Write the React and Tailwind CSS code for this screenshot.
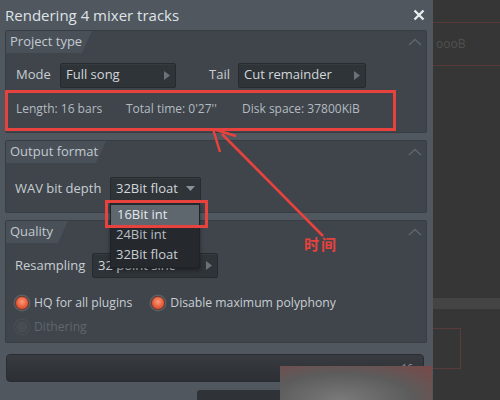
import React from "react";

const font = { fontFamily: '"Open Sans", "Noto Sans", "Noto Sans CJK SC", sans-serif' };

function Chevron() {
  return (
    <svg width="14" height="8" viewBox="0 0 14 8" className="mr-[4px]">
      <path d="M1 7 L7 1.5 L13 7" fill="none" stroke="#5d656d" strokeWidth="1.6" />
    </svg>
  );
}

function PanelHeader({ title, width }) {
  return (
    <div className="flex items-start justify-between h-[22px]">
      <div className="relative h-[22px] flex items-center" style={{ width }}>
        <svg className="absolute inset-0" width={width} height="22" viewBox={`0 0 ${width} 22`}>
          <path d={`M0 0 H${width} L${width - 10} 22 H0 Z`} fill="#495058" />
        </svg>
        <span className="relative pl-[4px] text-[13px] text-[#c3cad0]">{title}</span>
      </div>
      <div className="pt-[7px]">
        <Chevron />
      </div>
    </div>
  );
}

function Select({ value, width, arrow = "right" }) {
  return (
    <div
      className="h-[25px] bg-[#2f3439] border border-[#272b2f] rounded-[2px] flex items-center justify-between px-[5px] shadow-[inset_0_1px_0_#363b40]"
      style={{ width }}
    >
      <span className="text-[13px] text-[#d2d7db] whitespace-nowrap">{value}</span>
      {arrow === "right" ? (
        <svg width="6" height="9" viewBox="0 0 6 9"><path d="M0 0 L6 4.5 L0 9 Z" fill="#6a7178" /></svg>
      ) : (
        <svg width="9" height="6" viewBox="0 0 9 6"><path d="M0 0 H9 L4.5 5 Z" fill="#8a9198" /></svg>
      )}
    </div>
  );
}

function Radio({ on, label }) {
  return (
    <div className="flex items-center gap-[5px]">
      <div
        className={`w-[14px] h-[14px] rounded-full border ${
          on
            ? "border-[#7a3a2c] bg-[radial-gradient(circle_at_50%_40%,#ff9a78,#e35a39_60%,#b8452c)] shadow-[0_0_0_1.5px_#5a5f64]"
            : "border-[#3c4146] bg-[#464c52] shadow-[0_0_0_1.5px_#474d53]"
        }`}
      />
      <span className={`text-[12.2px] ${on ? "text-[#c8ced3]" : "text-[#5f666d]"}`}>{label}</span>
    </div>
  );
}

export default function App() {
  return (
    <div className="relative w-[500px] h-[400px] overflow-hidden bg-[#363636] flex" style={font}>
      {/* dialog */}
      <div className="w-[433px] h-full bg-[#50575e] flex flex-col pl-[5px] pr-[6px]">
        <div className="h-[30px] flex items-center justify-between">
          <span className="text-[15px] text-[#dfe3e7]">Rendering 4 mixer tracks</span>
          <svg width="12" height="12" viewBox="0 0 12 12" className="mr-[2px]">
            <path d="M1.5 1.5 L10.5 10.5 M10.5 1.5 L1.5 10.5" stroke="#e8ecef" strokeWidth="2.4" />
          </svg>
        </div>

        {/* Project type */}
        <div className="h-[104px] bg-[#3f454b] border border-[#383d42] rounded-[2px] flex flex-col">
          <PanelHeader title="Project type" width={86} />
          <div className="flex items-center mt-[10px] pl-[10px]">
            <span className="text-[13px] text-[#c8ced3] w-[44px]">Mode</span>
            <Select value="Full song" width={116} />
            <span className="text-[13px] text-[#c8ced3] ml-[33px] w-[29px]">Tail</span>
            <Select value="Cut remainder" width={128} />
          </div>
          <div className="flex items-center mt-[12px] pl-[10px] text-[12px] text-[#b4bbc1]">
            <span className="w-[110px]">Length: 16 bars</span>
            <span className="w-[116px]">Total time: 0'27''</span>
            <span>Disk space: 37800KiB</span>
          </div>
        </div>

        {/* Output format */}
        <div className="mt-[7px] h-[74px] bg-[#3f454b] border border-[#383d42] rounded-[2px] flex flex-col">
          <PanelHeader title="Output format" width={100} />
          <div className="flex items-center mt-[14px] pl-[9px]">
            <span className="text-[13px] text-[#c8ced3] w-[95px]">WAV bit depth</span>
            <Select value="32Bit float" width={91} arrow="down" />
          </div>
        </div>

        {/* Quality */}
        <div className="mt-[7px] h-[125px] bg-[#3f454b] border border-[#383d42] rounded-[2px] flex flex-col">
          <PanelHeader title="Quality" width={62} />
          <div className="flex items-center mt-[10px] pl-[9px]">
            <span className="text-[13px] text-[#c8ced3] w-[77px]">Resampling</span>
            <Select value="32 point sinc" width={126} />
          </div>
          <div className="flex items-center mt-[16px] pl-[9px] gap-[19px]">
            <Radio on label="HQ for all plugins" />
            <Radio on label="Disable maximum polyphony" />
          </div>
          <div className="flex items-center mt-[6px] pl-[9px]">
            <Radio label="Dithering" />
          </div>
        </div>

        {/* progress bar */}
        <div className="mt-[11px] ml-[1px] w-[418px] h-[28px] rounded-[4px] bg-gradient-to-b from-[#383c41] to-[#2c3034] border border-[#2a2e32] flex items-center justify-end pr-[10px]">
          <span className="text-[10px] text-[#8d949a]">16</span>
        </div>
        <div className="mt-[8px] ml-[192px] w-[100px] h-[10px] bg-[#2f3337] rounded-t-[3px]" />
      </div>

      {/* blurred background window on the right */}
      <div className="flex-1 h-full flex flex-col">
        <div className="h-[8px]" />
        <div className="h-[1px] bg-[#5a3838] mt-[14px]" />
        <div className="h-[42px] flex items-center text-[12px] text-[#505050] pl-[3px]">oooB</div>
        <div className="h-[1px] bg-[#5a3838]" />
        <div className="h-[232px]" />
        <div className="h-[11px] bg-[#444444]" />
        <div className="h-[19px]" />
        <div className="w-[28px] h-[41px] border-r border-b border-t border-[#5a3a3a]" />
      </div>

      {/* dropdown list */}
      <div className="absolute left-[110px] top-[202px] w-[90px] h-[66px] bg-[#25292d] border border-[#1f2326] shadow-[0_2px_4px_rgba(0,0,0,0.4)] flex flex-col py-[2px]">
        <div className="h-[21px] bg-[#5e666e] flex items-center pl-[6px] text-[13px] text-[#e4e8eb]">16Bit int</div>
        <div className="h-[21px] flex items-center pl-[5px] text-[13px] text-[#b8bec4]">24Bit int</div>
        <div className="h-[21px] flex items-center pl-[5px] text-[13px] text-[#c8ced3]">32Bit float</div>
      </div>

      {/* annotations */}
      <div className="absolute left-[5px] top-[90px] w-[391px] h-[41px] border-[3px] border-[#e8423f]" />
      <div className="absolute left-[105px] top-[200px] w-[103px] h-[28px] border-[3px] border-[#e8423f]" />
      <svg className="absolute left-0 top-0" width="500" height="400" viewBox="0 0 500 400">
        <line x1="222" y1="134" x2="323" y2="236" stroke="#e8423f" strokeWidth="2.5" />
        <path d="M213 129 L236 136 M213 129 L220 152" stroke="#e8423f" strokeWidth="2.5" fill="none" />
      </svg>
      <div className="absolute left-[304px] top-[233px] text-[15px] font-bold text-[#e8423f] tracking-[2px]" style={{ fontFamily: '"Noto Sans CJK SC", sans-serif' }}>
        时间
      </div>

      {/* watermark glow */}
      <div className="absolute left-[280px] top-[366px] w-[152px] h-[34px] bg-[radial-gradient(ellipse_at_40%_100%,#7a7a7a,#5c5c5c_55%,#7a4848)]" />
    </div>
  );
}
